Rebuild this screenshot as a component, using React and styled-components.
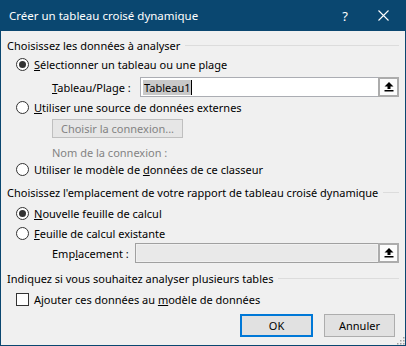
import React from "react";
import styled, { createGlobalStyle } from "styled-components";

const Global = createGlobalStyle`
  html, body { margin: 0; padding: 0; background: #f0f0f0; }
  body { font-family: "Noto Sans", "Open Sans", sans-serif; font-size: 11px; color: #000; }
  * { box-sizing: border-box; }
`;

const Win = styled.div`
  width: 406px;
  height: 346px;
  display: flex;
  flex-direction: column;
  background: #f0f0f0;
  border: 1px solid #0a4770;
  border-top: none;
  position: relative;
  overflow: hidden;
`;

const TitleBar = styled.div`
  height: 31px;
  margin: 0 -1px;
  background: #0a4770;
  color: #fff;
  display: flex;
  align-items: center;
  padding-left: 9px;
  font-size: 11.5px;
`;

const TitleText = styled.div`
  flex: 1;
`;

const TitleBtn = styled.div`
  width: ${(p) => p.$w}px;
  display: flex;
  justify-content: center;
  align-items: center;
  font-size: ${(p) => p.$fs || 12}px;
`;

const Body = styled.div`
  display: flex;
  flex-direction: column;
  padding: 0 6px 0 6px;
`;

const Header = styled.div`
  height: 20px;
  margin-top: ${(p) => p.$mt}px;
  display: flex;
  align-items: center;
  gap: 5px;
  &::after {
    content: "";
    flex: 1;
    height: 1px;
    background: #dcdcdc;
  }
`;

const HeaderText = styled.span`
  white-space: nowrap;
  flex-shrink: 0;
`;

const Row = styled.div`
  height: ${(p) => p.$h || 18}px;
  margin-top: ${(p) => p.$mt || 0}px;
  display: flex;
  align-items: center;
  padding-left: ${(p) => p.$pl || 0}px;
`;

const RadioCircle = styled.span`
  width: 13px;
  height: 13px;
  flex-shrink: 0;
  border-radius: 50%;
  border: 1px solid #333;
  background: #fff;
  display: inline-flex;
  align-items: center;
  justify-content: center;
  margin-right: 5px;
  &::after {
    content: "";
    width: 7px;
    height: 7px;
    border-radius: 50%;
    background: ${(p) => (p.$on ? "#333" : "transparent")};
  }
`;

const CheckBox = styled.span`
  width: 13px;
  height: 13px;
  flex-shrink: 0;
  border: 1px solid #333;
  background: #fff;
  margin-right: 5px;
`;

const Label = styled.span`
  color: ${(p) => (p.$disabled ? "#838383" : "#000")};
  width: ${(p) => (p.$w ? p.$w + "px" : "auto")};
  flex-shrink: 0;
  white-space: nowrap;
`;

const Field = styled.div`
  width: ${(p) => p.$w}px;
  height: 20px;
  display: flex;
  border: 1px solid ${(p) => (p.$disabled ? "#a0a0a0" : "#abadb3")};
  background: ${(p) => (p.$disabled ? "#f0f0f0" : "#fff")};
`;

const FieldText = styled.div`
  flex: 1;
  display: flex;
  align-items: center;
  padding-left: 2px;
  background: ${(p) => (p.$disabled ? "#e9e9e9" : "#fff")};
  margin: ${(p) => (p.$disabled ? "1px" : "0")};
`;

const Selected = styled.span`
  background: #c8c8c8;
  padding: 0 1px;
  line-height: 15px;
  border-right: 1px solid #000;
`;

const PickBtn = styled.div`
  width: 21px;
  margin: -1px -1px -1px 0;
  border: 2px solid #acacac;
  background: #fcfcfc;
  display: flex;
  align-items: center;
  justify-content: center;
`;

const DisabledBtn = styled.div`
  width: 131px;
  height: 19px;
  border: 1px solid #bfbfbf;
  background: #e6e6e6;
  color: #838383;
  display: flex;
  align-items: center;
  justify-content: center;
`;

const Footer = styled.div`
  display: flex;
  justify-content: flex-end;
  gap: 11px;
  margin-top: 6px;
  padding-right: 4px;
`;

const Button = styled.div`
  width: ${(p) => p.$w}px;
  height: 23px;
  background: #e1e1e1;
  border: ${(p) => (p.$default ? "2px solid #0078d7" : "1px solid #adadad")};
  display: flex;
  align-items: center;
  justify-content: center;
`;

const Grip = styled.svg`
  position: absolute;
  right: 0;
  bottom: 0;
`;

const UpArrow = () => (
  <svg width="10" height="10" viewBox="0 0 10 10">
    <polygon points="5,0 9.5,4.5 6.5,4.5 6.5,7 3.5,7 3.5,4.5 0.5,4.5" fill="#000" />
    <rect x="0.5" y="8" width="9" height="1.5" fill="#000" />
  </svg>
);

export default function App() {
  return (
    <>
      <Global />
      <Win>
        <TitleBar>
          <TitleText>Créer un tableau croisé dynamique</TitleText>
          <TitleBtn $w={30} $fs={13}>?</TitleBtn>
          <TitleBtn $w={46}>
            <svg width="11" height="11" viewBox="0 0 11 11">
              <path d="M0.5 0.5 L10.5 10.5 M10.5 0.5 L0.5 10.5" stroke="#fff" strokeWidth="1.1" />
            </svg>
          </TitleBtn>
        </TitleBar>
        <Body>
          <Header $mt={4}><HeaderText>Choisissez les données à analyser</HeaderText></Header>
          <Row $pl={9}>
            <RadioCircle $on />
            <Label><u>S</u>électionner un tableau ou une plage</Label>
          </Row>
          <Row $h={20} $mt={4} $pl={45}>
            <Label $w={88}><u>T</u>ableau/Plage :</Label>
            <Field $w={259}>
              <FieldText>
                <Selected>Tableau1</Selected>
              </FieldText>
              <PickBtn><UpArrow /></PickBtn>
            </Field>
          </Row>
          <Row $mt={1} $pl={9}>
            <RadioCircle />
            <Label><u>U</u>tiliser une source de données externes</Label>
          </Row>
          <Row $h={19} $mt={3} $pl={45}>
            <DisabledBtn>Choisir la connexion...</DisabledBtn>
          </Row>
          <Row $h={16} $mt={6} $pl={45}>
            <Label $disabled>Nom de la connexion :</Label>
          </Row>
          <Row $pl={9}>
            <RadioCircle />
            <Label>Utiliser le modèle de <u>d</u>onnées de ce classeur</Label>
          </Row>
          <Header $mt={4}><HeaderText>Choisissez l'emplacement de votre rapport de tableau croisé dynamique</HeaderText></Header>
          <Row $mt={2} $pl={9}>
            <RadioCircle $on />
            <Label><u>N</u>ouvelle feuille de calcul</Label>
          </Row>
          <Row $mt={2} $pl={9}>
            <RadioCircle />
            <Label><u>F</u>euille de calcul existante</Label>
          </Row>
          <Row $h={20} $mt={1} $pl={45}>
            <Label $w={83}>Emp<u>l</u>acement :</Label>
            <Field $w={264} $disabled>
              <FieldText $disabled />
              <PickBtn><UpArrow /></PickBtn>
            </Field>
          </Row>
          <Header $mt={5}><HeaderText>Indiquez si vous souhaitez analyser plusieurs tables</HeaderText></Header>
          <Row $mt={2} $pl={9}>
            <CheckBox />
            <Label>Ajouter ces données au <u>m</u>odèle de données</Label>
          </Row>
          <Footer>
            <Button $w={73} $default>OK</Button>
            <Button $w={71}>Annuler</Button>
          </Footer>
        </Body>
        <Grip width="12" height="12" viewBox="0 0 12 12">
          {[[10, 10], [7, 10], [4, 10], [10, 7], [7, 7], [10, 4]].map(([x, y], i) => (
            <rect key={i} x={x} y={y} width="1.5" height="1.5" fill="#a0a0a0" />
          ))}
        </Grip>
      </Win>
    </>
  );
}
